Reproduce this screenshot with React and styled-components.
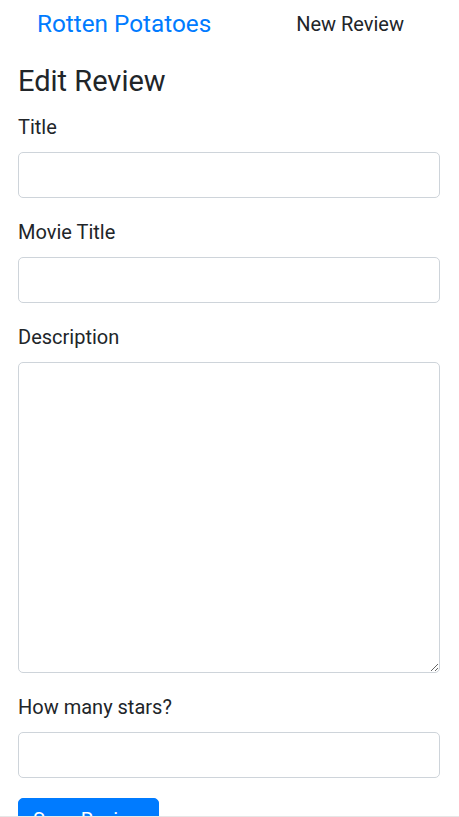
import React from 'react'
import styled, { createGlobalStyle } from 'styled-components'

const GlobalStyle = createGlobalStyle`
  html, body {
    margin: 0;
    padding: 0;
    background: #fff;
  }
  body {
    font-family: Roboto, "Liberation Sans", Arial, sans-serif;
    font-size: 20px;
    color: #212529;
  }
  * {
    box-sizing: border-box;
  }
`

const Page = styled.div`
  padding: 0 19px 0 18px;
`

const Nav = styled.nav`
  height: 48px;
  display: flex;
  align-items: center;
  justify-content: space-between;
  padding: 0 36px 0 19px;
`

const Brand = styled.a`
  font-size: 24.3px;
  line-height: 36px;
  color: #007bff;
  text-decoration: none;
`

const NavLink = styled.a`
  font-size: 20px;
  line-height: 29px;
  color: #212529;
  text-decoration: none;
`

const Heading = styled.h2`
  margin: 16px 0 14px;
  font-size: 29px;
  line-height: 35px;
  font-weight: 400;
`

const FormGroup = styled.div`
  margin-bottom: 20px;
`

const Label = styled.label`
  display: block;
  font-size: 20px;
  line-height: 29px;
  margin-bottom: 10px;
`

const Input = styled.input`
  display: block;
  width: 100%;
  height: ${p => p.$tall ? '311px' : '46px'};
  padding: 7px 14px;
  font-family: inherit;
  font-size: 20px;
  color: #495057;
  background: #fff;
  border: 1px solid #ced4da;
  border-radius: 5px;
  outline: none;
`

const TextArea = styled(Input).attrs({ as: 'textarea' })`
  resize: vertical;
`

const Button = styled.button`
  display: inline-block;
  padding: 7px 14px;
  font-family: inherit;
  font-size: 20px;
  line-height: 29px;
  color: #fff;
  background: #007bff;
  border: 1px solid #007bff;
  border-radius: 5px;
`

const BottomEdge = styled.div`
  position: fixed;
  left: 0;
  right: 0;
  bottom: 0;
  height: 1px;
  background: #e6e6e6;
`

const fields = [
  { id: 'title', label: 'Title' },
  { id: 'movie', label: 'Movie Title' },
  { id: 'description', label: 'Description', multiline: true },
  { id: 'stars', label: 'How many stars?' },
]

export default function App() {
  return (
    <Page>
      <GlobalStyle />
      <Nav>
        <Brand href="#">Rotten Potatoes</Brand>
        <NavLink href="#">New Review</NavLink>
      </Nav>
      <Heading>Edit Review</Heading>
      <form onSubmit={e => e.preventDefault()}>
        {fields.map(f => (
          <FormGroup key={f.id}>
            <Label htmlFor={f.id}>{f.label}</Label>
            {f.multiline
              ? <TextArea id={f.id} $tall />
              : <Input id={f.id} type="text" />}
          </FormGroup>
        ))}
        <Button type="submit">Save Review</Button>
      </form>
      <BottomEdge />
    </Page>
  )
}
